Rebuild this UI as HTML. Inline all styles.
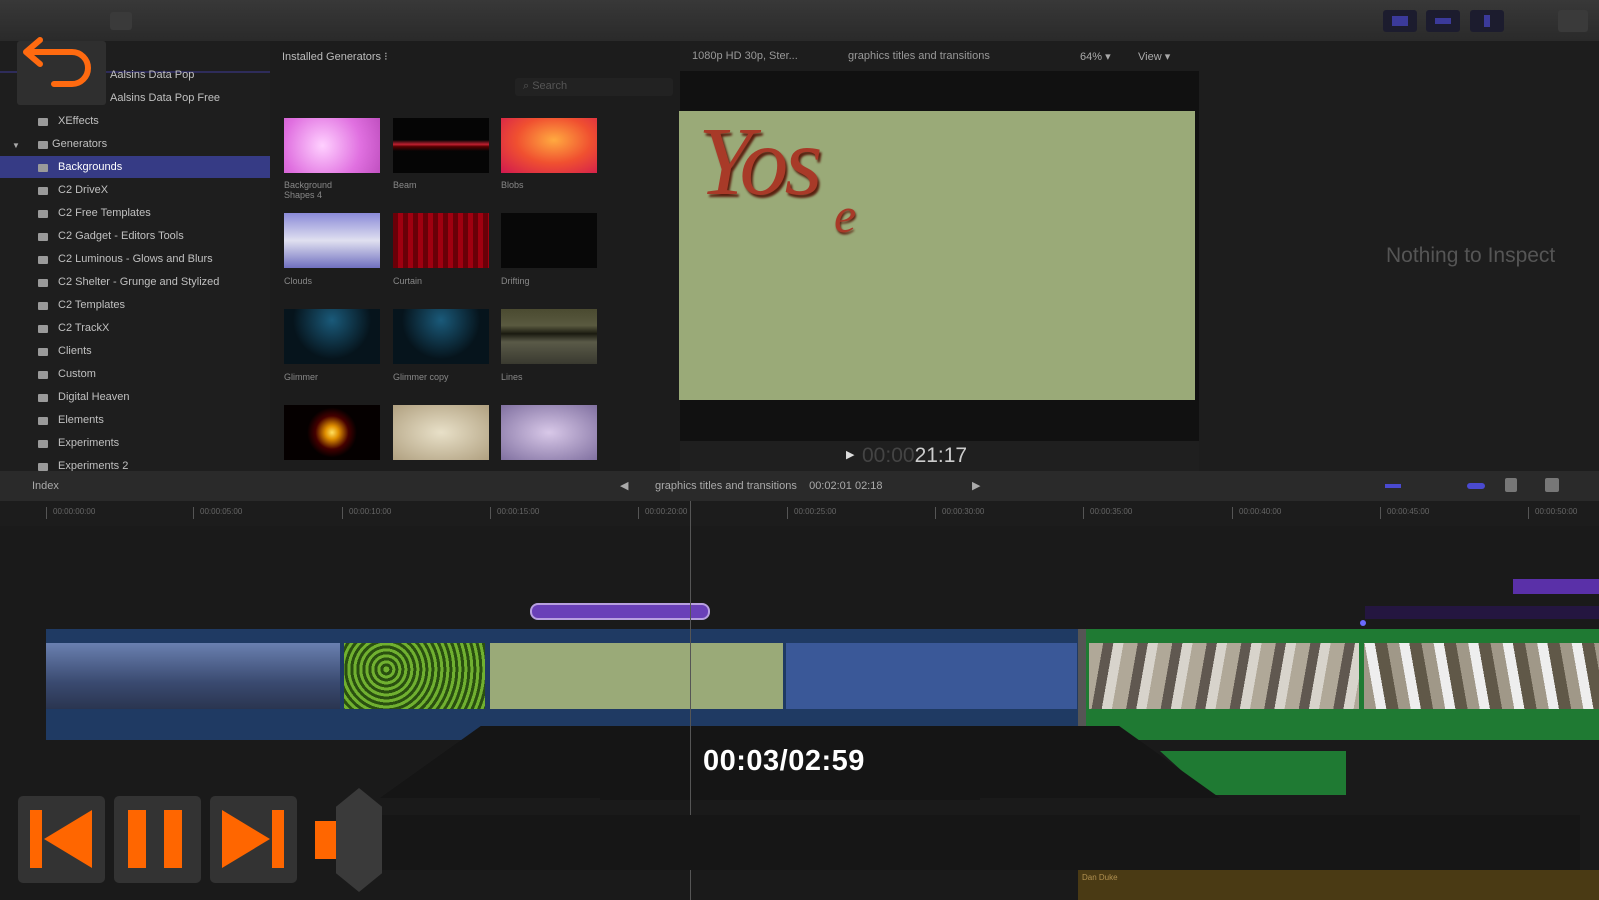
<!DOCTYPE html>
<html><head><meta charset="utf-8"><style>
*{margin:0;padding:0;box-sizing:border-box}
body{width:1599px;height:900px;overflow:hidden;background:#1a1a1a;font-family:"Liberation Sans",sans-serif;position:relative;color:#ccc}
.a{position:absolute}
.t{font-size:11px;color:#bdbdbd;white-space:nowrap}
.row{position:absolute;left:0;width:270px;height:23px;font-size:11px;color:#c0c0c0;line-height:23px;padding-left:58px;white-space:nowrap}
.row:before{content:"";position:absolute;left:38px;top:8px;width:10px;height:8px;background:#9a9a9a;border-radius:1px}
.th{position:absolute;width:96px;height:55px}
.cap{position:absolute;font-size:9px;color:#888}
.btn{position:absolute;top:796px;width:87px;height:87px;background:#333;border-radius:5px}
.tick{position:absolute;top:507px;font-size:8px;color:#666;border-left:1px solid #555;padding-left:6px;height:12px}
</style></head><body>
<div class="a" style="left:0;top:0;width:1599px;height:41px;background:linear-gradient(#383838,#2a2a2a)"></div>
<div class="a" style="left:1383px;top:10px;width:34px;height:22px;background:#1c1c2e;border-radius:3px"><div class="a" style="left:9px;top:6px;width:16px;height:10px;background:#3b3a9a"></div></div>
<div class="a" style="left:1426px;top:10px;width:34px;height:22px;background:#1c1c2e;border-radius:3px"><div class="a" style="left:9px;top:8px;width:16px;height:6px;background:#3b3a9a"></div></div>
<div class="a" style="left:1470px;top:10px;width:34px;height:22px;background:#1c1c2e;border-radius:3px"><div class="a" style="left:14px;top:5px;width:6px;height:12px;background:#3b3a9a"></div></div>
<div class="a" style="left:1558px;top:10px;width:30px;height:22px;background:#3a3a3a;border-radius:3px"></div>
<div class="a" style="left:110px;top:12px;width:22px;height:18px;background:#3a3a3a;border-radius:3px"></div>

<div class="a" style="left:0;top:41px;width:270px;height:430px;background:#1e1e1e"></div>
<div class="a" style="left:0;top:71px;width:680px;height:2px;background:#2e2c5a"></div>
<div class="a" style="left:0;top:156px;width:270px;height:22px;background:#363b85"></div>
<div class="row" style="top:64px;padding-left:110px">Aalsins Data Pop</div>
<div class="row" style="top:87px;padding-left:110px">Aalsins Data Pop Free</div>
<div class="row" style="top:110px">XEffects</div>
<div class="row" style="top:133px;padding-left:49px;">&nbsp;Generators</div>
<div class="a" style="left:12px;top:141px;font-size:8px;color:#aaa">▼</div>
<div class="row" style="top:156px;color:#fff">Backgrounds</div>
<div class="row" style="top:179px">C2 DriveX</div>
<div class="row" style="top:202px">C2 Free Templates</div>
<div class="row" style="top:225px">C2 Gadget - Editors Tools</div>
<div class="row" style="top:248px">C2 Luminous - Glows and Blurs</div>
<div class="row" style="top:271px">C2 Shelter - Grunge and Stylized</div>
<div class="row" style="top:294px">C2 Templates</div>
<div class="row" style="top:317px">C2 TrackX</div>
<div class="row" style="top:340px">Clients</div>
<div class="row" style="top:363px">Custom</div>
<div class="row" style="top:386px">Digital Heaven</div>
<div class="row" style="top:409px">Elements</div>
<div class="row" style="top:432px">Experiments</div>
<div class="row" style="top:455px;height:16px;overflow:hidden">Experiments 2</div>

<div class="a" style="left:17px;top:41px;width:89px;height:64px;background:#2f2f2f;border-radius:3px"></div>
<svg class="a" style="left:20px;top:36px" width="84" height="60" viewBox="0 0 84 60"><path d="M8 16 H52 A16 16 0 0 1 52 48 H34" fill="none" stroke="#ff6a10" stroke-width="6" stroke-linecap="round"/><path d="M20 4 L6 16 L20 28" fill="none" stroke="#ff6a10" stroke-width="6" stroke-linecap="round" stroke-linejoin="round"/></svg>

<div class="a" style="left:270px;top:41px;width:410px;height:430px;background:#1c1c1c"></div>
<div class="a t" style="left:282px;top:50px;font-size:11px">Installed Generators ⁝</div>
<div class="a" style="left:515px;top:78px;width:158px;height:18px;background:#222;border-radius:3px"><span class="t" style="position:absolute;left:8px;top:2px;color:#555">⌕ Search</span></div>
<div class="th" style="left:284px;top:118px;background:radial-gradient(circle at 40% 50%,#ffd0ff,#e070e0 60%,#c050c0)"></div>
<div class="th" style="left:393px;top:118px;background:linear-gradient(#050505 40%,#c02030 48%,#500 52%,#050505 60%)"></div>
<div class="th" style="left:501px;top:118px;background:radial-gradient(ellipse at 55% 40%,#ffaa40,#f05030 50%,#d01850)"></div>
<div class="cap" style="left:284px;top:180px">Background<br>Shapes 4</div><div class="cap" style="left:393px;top:180px">Beam</div><div class="cap" style="left:501px;top:180px">Blobs</div>
<div class="th" style="left:284px;top:213px;background:linear-gradient(#8a8ad8,#e0e0f0 50%,#7070c0)"></div>
<div class="th" style="left:393px;top:213px;background:repeating-linear-gradient(90deg,#6a0008 0 5px,#a00010 5px 10px)"></div>
<div class="th" style="left:501px;top:213px;background:#080808"></div>
<div class="cap" style="left:284px;top:276px">Clouds</div><div class="cap" style="left:393px;top:276px">Curtain</div><div class="cap" style="left:501px;top:276px">Drifting</div>
<div class="th" style="left:284px;top:309px;background:radial-gradient(circle at 50% 20%,#1a5a7a,#06141c 60%)"></div>
<div class="th" style="left:393px;top:309px;background:radial-gradient(circle at 50% 20%,#1a5a7a,#06141c 60%)"></div>
<div class="th" style="left:501px;top:309px;background:linear-gradient(#4a4a30,#5a5a40 30%,#1a1a10 45%,#5a5a48 60%,#3a3a30)"></div>
<div class="cap" style="left:284px;top:372px">Glimmer</div><div class="cap" style="left:393px;top:372px">Glimmer copy</div><div class="cap" style="left:501px;top:372px">Lines</div>
<div class="th" style="left:284px;top:405px;background:radial-gradient(circle,#ffe060 0,#e09000 12%,#400 30%,#050000 45%)"></div>
<div class="th" style="left:393px;top:405px;background:radial-gradient(#e8e0c8,#b0a080)"></div>
<div class="th" style="left:501px;top:405px;background:radial-gradient(#d8c8e8,#8070a0)"></div>

<div class="a" style="left:680px;top:41px;width:519px;height:430px;background:#111"></div>
<div class="a" style="left:680px;top:41px;width:919px;height:30px;background:#1d1d1d"></div>
<div class="a t" style="left:692px;top:50px;color:#999">1080p HD 30p, Ster...</div>
<div class="a t" style="left:848px;top:50px;color:#999">graphics titles and transitions</div>
<div class="a t" style="left:1080px;top:50px;color:#aaa">64% ▾</div>
<div class="a t" style="left:1138px;top:50px;color:#aaa">View ▾</div>
<div class="a" style="left:679px;top:111px;width:516px;height:289px;background:#9aaa78"></div>
<div class="a" style="left:698px;top:106px;font-family:'Liberation Serif',serif;font-style:italic;font-size:98px;color:#a83a28;text-shadow:2px 3px 2px #5a2010;letter-spacing:-4px">Yos</div>
<div class="a" style="left:834px;top:186px;font-family:'Liberation Serif',serif;font-style:italic;font-size:50px;color:#a83a28;text-shadow:1px 2px 2px #5a2010">e</div>
<div class="a" style="left:680px;top:441px;width:519px;height:30px;background:#1f1f1f"></div>
<div class="a" style="left:846px;top:448px;font-size:11px;color:#ddd">▶</div>
<div class="a" style="left:862px;top:444px;font-size:21px;color:#444">00:00<span style="color:#ccc">21:17</span></div>
<div class="a" style="left:1199px;top:71px;width:400px;height:400px;background:#1d1d1d"></div>
<div class="a" style="left:1386px;top:244px;font-size:21px;color:#555">Nothing to Inspect</div>

<div class="a" style="left:0;top:471px;width:1599px;height:30px;background:#2a2a2a"></div>
<div class="a t" style="left:32px;top:480px;color:#aaa">Index</div>
<div class="a t" style="left:620px;top:479px;color:#aaa">◀</div>
<div class="a t" style="left:655px;top:480px;color:#aaa">graphics titles and transitions &nbsp;&nbsp; 00:02:01 02:18</div>
<div class="a t" style="left:972px;top:479px;color:#aaa">▶</div>
<div class="a" style="left:1385px;top:484px;width:16px;height:4px;background:#4a4ad0"></div>
<div class="a" style="left:1467px;top:483px;width:18px;height:6px;background:#4a4ad0;border-radius:3px"></div>
<div class="a" style="left:1505px;top:478px;width:12px;height:14px;background:#777;border-radius:2px"></div>
<div class="a" style="left:1545px;top:478px;width:14px;height:14px;background:#777;border-radius:2px"></div>
<div class="a" style="left:0;top:501px;width:1599px;height:25px;background:#1c1c1c"></div>
<div class="tick" style="left:46px">00:00:00:00</div><div class="tick" style="left:193px">00:00:05:00</div><div class="tick" style="left:342px">00:00:10:00</div><div class="tick" style="left:490px">00:00:15:00</div><div class="tick" style="left:638px">00:00:20:00</div><div class="tick" style="left:787px">00:00:25:00</div><div class="tick" style="left:935px">00:00:30:00</div><div class="tick" style="left:1083px">00:00:35:00</div><div class="tick" style="left:1232px">00:00:40:00</div><div class="tick" style="left:1380px">00:00:45:00</div><div class="tick" style="left:1528px">00:00:50:00</div>

<div class="a" style="left:530px;top:603px;width:180px;height:17px;background:#6a40b8;border:2px solid #b8a0e0;border-radius:8px"></div>
<div class="a" style="left:1513px;top:579px;width:86px;height:15px;background:#5a30a8"></div>
<div class="a" style="left:1365px;top:606px;width:234px;height:13px;background:#241640"></div>

<div class="a" style="left:46px;top:629px;width:1032px;height:111px;background:#1f3a63"></div>
<div class="a" style="left:46px;top:643px;width:294px;height:66px;background:linear-gradient(#6a80b0,#3a4a70 60%,#2a3550)"></div>
<div class="a" style="left:344px;top:643px;width:141px;height:66px;background:repeating-radial-gradient(circle at 30% 40%,#70b030 0 3px,#2a5010 3px 6px)"></div>
<div class="a" style="left:490px;top:643px;width:293px;height:66px;background:#9aaa78"></div>
<div class="a" style="left:786px;top:643px;width:291px;height:66px;background:#3a5898"></div>
<div class="a" style="left:1078px;top:629px;width:8px;height:111px;background:#555"></div>
<div class="a" style="left:1086px;top:629px;width:513px;height:111px;background:#1f7a33"></div>
<div class="a" style="left:1089px;top:643px;width:270px;height:66px;background:repeating-linear-gradient(100deg,#b0a898 0 14px,#605850 14px 24px,#d8d4cc 24px 34px)"></div>
<div class="a" style="left:1364px;top:643px;width:235px;height:66px;background:repeating-linear-gradient(80deg,#a09888 0 12px,#eee 12px 22px,#605848 22px 34px)"></div>
<div class="a" style="left:1160px;top:751px;width:186px;height:44px;background:#1f7a33;clip-path:polygon(0 0,100% 0,100% 100%,26% 100%)"></div>
<div class="a" style="left:1360px;top:620px;width:6px;height:6px;background:#6a6aff;border-radius:50%"></div>

<div class="a" style="left:380px;top:726px;width:840px;height:72px;background:#151515;clip-path:polygon(12% 0,88% 0,100% 100%,0 100%)"></div>
<div class="a" style="left:600px;top:790px;width:380px;height:10px;background:#151515"></div>
<div class="a" style="left:690px;top:501px;width:1px;height:399px;background:#555"></div>
<div class="a" style="left:703px;top:745px;font-size:29px;font-weight:bold;color:#fff;letter-spacing:0.5px">00:03/02:59</div>

<div class="a" style="left:380px;top:815px;width:1200px;height:55px;background:#161616"></div>
<div class="a" style="left:1078px;top:870px;width:521px;height:30px;background:#4a3a14"></div>
<div class="a" style="left:1082px;top:873px;font-size:8px;color:#b09050">Dan Duke</div>

<div class="btn" style="left:18px"></div>
<div class="btn" style="left:114px"></div>
<div class="btn" style="left:210px"></div>
<svg class="a" style="left:18px;top:796px" width="87" height="87"><rect x="12" y="14" width="12" height="58" fill="#ff6600"/><path d="M74 14 V72 L26 43 Z" fill="#ff6600"/></svg>
<svg class="a" style="left:114px;top:796px" width="87" height="87"><rect x="14" y="14" width="18" height="58" fill="#ff6600"/><rect x="50" y="14" width="18" height="58" fill="#ff6600"/></svg>
<svg class="a" style="left:210px;top:796px" width="87" height="87"><path d="M12 14 V72 L60 43 Z" fill="#ff6600"/><rect x="62" y="14" width="12" height="58" fill="#ff6600"/></svg>
<div class="a" style="left:315px;top:821px;width:22px;height:38px;background:#ff6600"></div>
<div class="a" style="left:336px;top:788px;width:46px;height:104px;background:#3a3a3a;clip-path:polygon(50% 0,100% 18%,100% 82%,50% 100%,0 82%,0 18%)"></div>
</body></html>
